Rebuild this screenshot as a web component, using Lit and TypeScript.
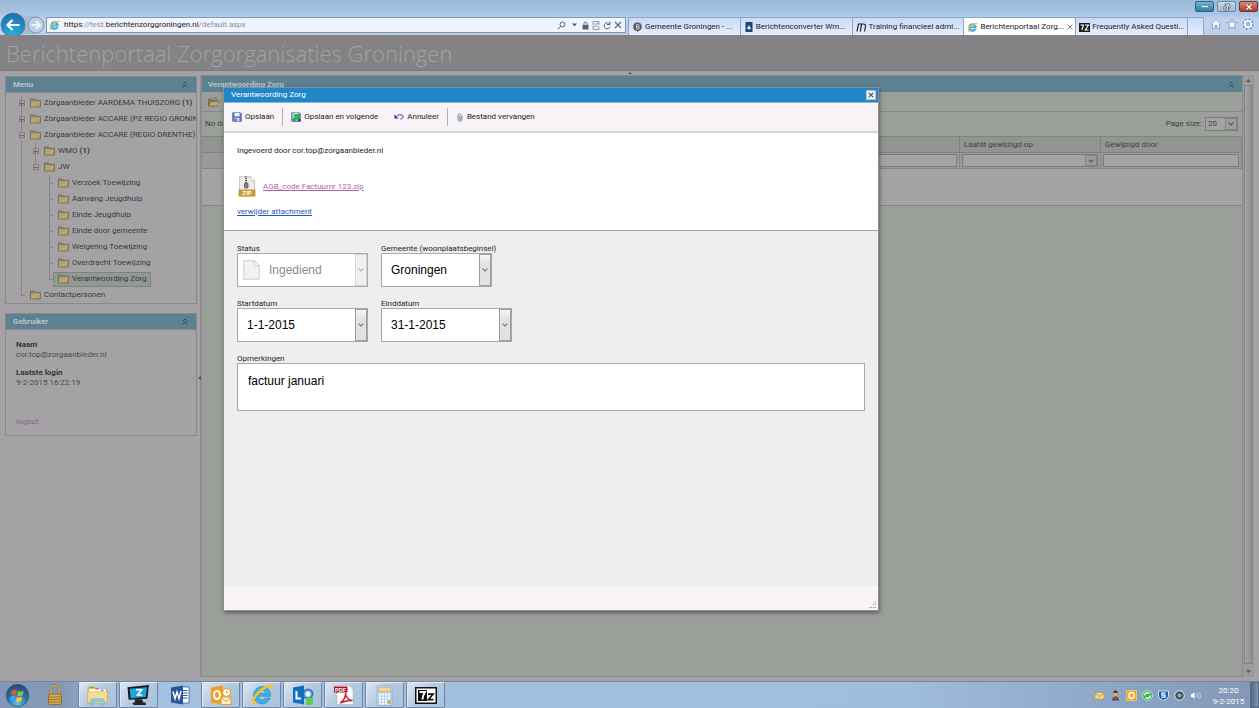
import { LitElement, html, css, svg, nothing } from "lit";
import { customElement, property } from "lit/decorators.js";
import { classMap } from "lit/directives/class-map.js";

const base = css`
  * { box-sizing: border-box; }
  button, input, select, textarea { font: inherit; color: inherit; margin: 0; padding: 0; border: 0; border-radius: 0; background: none; outline: none; }
  button { cursor: pointer; }
  svg { display: block; flex: none; }
  ul { list-style: none; margin: 0; padding: 0; }
`;

/* ---------- icons ---------- */
const ieLogo = (s: number) => html`<svg width=${s} height=${s} viewBox="0 0 24 24">
  <path d="M12 3.500a8.700 8.700 0 1 0 8.200 11.600h-4.600a4.400 4.400 0 0 1-7.800-1.800h12.900A8.700 8.700 0 0 0 12 3.500zM7.900 10.300a4.300 4.300 0 0 1 8.200 0z" fill="#3fb0e6" stroke="#1f86c4" stroke-width=".6"/>
  <path d="M2.600 21.300C-.5 17.500 6 8 13.500 4 18 1.500 22.500.8 22.800 3.600c.1 1.300-.4 2.600-1 3.700.3-2-.6-3.300-3-2.700C12.500 6 4.500 14.500 4.300 18.700c0 1.600 1.500 1.700 3.200 1-1.800 1.500-3.700 2.600-4.900 1.600z" fill="#f7c325"/>
</svg>`;

const folder = html`<svg width="11" height="10" viewBox="0 0 22 20">
  <defs><linearGradient id="fg" x1="0" y1="0" x2="1" y2="1"><stop offset="0" stop-color="#a99f82"/><stop offset=".6" stop-color="#bba873"/><stop offset="1" stop-color="#b1934a"/></linearGradient></defs>
  <path d="M1 2h8l2 2.500h10V18H1z" fill="#8f8563" stroke="#67624f" stroke-width="1.400"/>
  <path d="M2 6.500h18V17H2z" fill="url(#fg)"/>
</svg>`;

const chevrons = html`<svg width="6" height="7" viewBox="0 0 6 7" fill="none" stroke="#2f4a54" stroke-width="1"><path d="M.8 3.200L3 1l2.200 2.200M.8 6.200L3 4l2.200 2.200"/></svg>`;

const arrowDown = html`<svg width="6" height="4" viewBox="0 0 6 4" fill="none" stroke="currentColor" stroke-width="1.100"><path d="M.6.6L3 3 5.400.6"/></svg>`;

const floppy = html`<svg width="10" height="10" viewBox="0 0 20 20">
  <path d="M1.500 1.500h15l2 2v15h-17z" fill="#6f7fd0" stroke="#4250a0" stroke-width="1.600"/>
  <path d="M5 1.500h10v7H5z" fill="#eef1ff"/><path d="M5 12h10v6.500H5z" fill="#c9d0f2"/><path d="M6.500 13.500H9v5H6.500z" fill="#36427f"/>
</svg>`;

const floppyNext = html`<svg width="10" height="10" viewBox="0 0 20 20">
  <path d="M1.500 1.500h15l2 2v15h-17z" fill="#b4bdec" stroke="#4250a0" stroke-width="1.600"/>
  <path d="M5 1.500h10v6H5z" fill="#eef1ff"/>
  <path d="M3 15l6-5-3-5 12-1-2 12-4-3-5 6z" fill="#22c23c" stroke="#0f8d26" stroke-width="1"/><path d="M14 14h5v5h-5z" fill="#36427f"/>
</svg>`;

const undo = html`<svg width="10" height="8" viewBox="0 0 20 16" fill="none" stroke="#2b2a86" stroke-width="2">
  <path d="M5 6.500C9 3 18 2 18 7c0 3-2 4.500-5 5"/><path d="M1 3v8h8z" fill="#2b2a86" stroke="none"/>
</svg>`;

const clip = html`<svg width="8" height="9" viewBox="-2 0 16 18" fill="none" stroke="#6c7c92" stroke-width="1.700">
  <path d="M10 6v6.500a4 4 0 0 1-8 0V5a3 3 0 0 1 6 0v7a1.500 1.500 0 0 1-3.200 0V6"/>
</svg>`;

const zipFile = html`<svg width="18" height="21" viewBox="0 0 36 42">
  <path d="M3 1.500h22l8 8V40H3z" fill="#ececec" stroke="#b5b5b5" stroke-width="1.500"/>
  <path d="M25 1.500v8h8z" fill="#fff" stroke="#b5b5b5"/>
  <path d="M16 1v13" stroke="#555" stroke-width="4" stroke-dasharray="2 1.500"/>
  <rect x="13" y="14" width="7" height="10" rx="2" fill="#888" stroke="#444" stroke-width="1.500"/>
  <path d="M1 27h34v14H1z" fill="#cf9a35"/>
  <text x="18" y="38" text-anchor="middle" font-family="Liberation Sans, sans-serif" font-weight="700" font-size="12" fill="#fff">ZIP</text>
</svg>`;

const docIcon = html`<svg class="doc" width="17" height="20" viewBox="0 0 34 40">
  <path d="M1.500 1.500h21l10 10v27h-31z" fill="#f3f3f5" stroke="#c9c9cd" stroke-width="1.800"/>
  <path d="M22.500 1.500v10h10z" fill="#fff" stroke="#bdbdc1" stroke-width="1.500"/>
</svg>`;

/* ---------- browser bar ---------- */
interface Tab { title: string; icon: unknown; active?: boolean; }

@customElement("browser-bar")
export class BrowserBar extends LitElement {
  static styles = [base, css`
    :host { display: block; position: relative; height: 35px; background: linear-gradient(#9bbad8, #a9c6e4 40%, #bfd4f1 55%, #bcd0ec); font: 8px/12px Roboto, sans-serif; color: #1b1b1f; }
    .row { display: flex; align-items: flex-end; height: 35px; }
    .nav { display: flex; align-items: center; width: 46px; height: 26px; flex: none; overflow: hidden; }
    .address { display: flex; align-items: center; gap: 4px; flex: 1 1 578px; min-width: 0; height: 16px; margin-bottom: 2px; padding: 0 3px 0 2px; background: #f0f4ff; border: 1px solid #8795ac; }
    .url { flex: 1; white-space: nowrap; color: #8a8d94; }
    .url b { font-weight: 400; color: #222; }
    .tools { display: flex; align-items: center; gap: 3px; }
    .tabs { display: flex; flex: 0 0 576px; margin-left: 2px; height: 18px; }
    .tab { display: flex; align-items: center; gap: 2px; flex: 1; min-width: 0; padding: 1px 2px 0 3px; border: 1px solid #8fa3c2; border-bottom: 0; border-right: 0; background: linear-gradient(#c8daf6, #e6eefd); white-space: nowrap; }
    .tab.active { background: #fff; }
    .tab.new { flex: 0 0 17px; border-right: 1px solid #8fa3c2; }
    .name { flex: 1; text-align: left; }
    .quick { display: flex; align-items: center; gap: 4px; width: 55px; height: 22px; padding-left: 6px; flex: none; }
    .win { position: absolute; top: 1px; right: 1px; display: flex; gap: 3px; }
    .win button { display: grid; place-items: center; width: 19px; height: 11px; border: 1px solid #6d88a8; border-radius: 2px; background: linear-gradient(#c6d7ea, #9fb9d6); }
    .win .min { background: linear-gradient(#6fb3d4, #2d7fa9); border-color: #2a6282; }
    .win .close { background: linear-gradient(#d98a7d, #b53a28); border-color: #7b3328; }
  `];

  tabs: Tab[] = [
    { title: "Gemeente Groningen - ...", icon: html`<svg width="11" height="10" viewBox="0 0 22 20"><path d="M11 1a8.500 8.500 0 0 1 2 16.800L11 20l-2-2.200A8.500 8.500 0 0 1 11 1z" fill="#5d5d5d"/><path d="M9 5h3a2 2 0 0 1 0 4.500H9zm0 4.500h3.500a2 2 0 0 1 0 4.500H9z" fill="none" stroke="#ddd" stroke-width="1.500"/></svg>` },
    { title: "Berichtenconverter Wm...", icon: html`<svg width="10" height="10" viewBox="0 0 20 20"><path d="M3 0h14v20H3z" fill="#1b4378"/><path d="M10 7v8M6 12h8" stroke="#fff" stroke-width="2.500"/></svg>` },
    { title: "Training financieel admi...", icon: html`<svg width="11" height="9" viewBox="0 0 22 18" fill="none" stroke="#222" stroke-width="2.400"><path d="M2 17L5 2h9q6 0 5 5l-2 10M11 3L8.500 17"/></svg>` },
    { title: "Berichtenportaal Zorg...", icon: ieLogo(11), active: true },
    { title: "Frequently Asked Questi...", icon: html`<svg width="11" height="9" viewBox="0 0 22 18"><path d="M0 0h22v18H0z" fill="#1c1c1c"/><path d="M3 4h6L5.500 14M12 4h7l-6.500 10H19" fill="none" stroke="#fff" stroke-width="2.200"/></svg>` },
  ];

  render() {
    return html`
      <div class="win">
        <button class="min" aria-label="Minimize"><svg width="8" height="3" viewBox="0 0 8 3"><path d="M.5.5h7v2h-7z" fill="#fff" stroke="#48627a" stroke-width=".5"/></svg></button>
        <button aria-label="Restore"><svg width="8" height="8" viewBox="0 0 16 16" fill="#fff" stroke="#48566a" stroke-width="1.500"><path d="M5 2h9v8H5z"/><path d="M2 6h9v8H2z"/><path d="M5 9h3v2H5z"/></svg></button>
        <button class="close" aria-label="Close"><svg width="8" height="6" viewBox="0 0 16 12"><path d="M3 1l10 10M13 1L3 11" stroke="#5a2a24" stroke-width="5"/><path d="M3 1l10 10M13 1L3 11" stroke="#fff" stroke-width="3"/></svg></button>
      </div>
      <div class="row">
        <div class="nav">
          <svg width="46" height="26" viewBox="0 0 46 26">
            <defs><radialGradient id="bk" cx=".5" cy=".9" r=".9"><stop offset="0" stop-color="#29b1e4"/><stop offset="1" stop-color="#1a70a8"/></radialGradient></defs>
            <path d="M14 4q12 3 22 3v18H14z" fill="#a7bbd6"/>
            <circle cx="13" cy="16" r="12" fill="url(#bk)" stroke="#5b7ea2"/>
            <path d="M19.500 16H8.500M12.500 11l-5 5 5 5" fill="none" stroke="#fff" stroke-width="2.200"/>
            <circle cx="36" cy="16" r="8" fill="#bccee8" stroke="#8296b2"/>
            <path d="M31.500 16h7M36 12l4 4-4 4" fill="none" stroke="#eef3fb" stroke-width="2.200"/>
          </svg>
        </div>
        <div class="address">
          ${ieLogo(11)}
          <span class="url"><b>https</b>://test.<b>berichtenzorggroningen.nl</b>/default.aspx</span>
          <span class="tools">
            <svg width="9" height="9" viewBox="0 0 18 18" fill="none" stroke="#5c626b" stroke-width="2"><circle cx="11" cy="7" r="5"/><path d="M7.500 10.500L1.500 16.500"/></svg>
            <svg width="10" height="4" viewBox="0 0 10 4"><path d="M3 .5h5L5.500 3.500z" fill="#5c626b"/></svg>
            <svg width="7" height="9" viewBox="0 0 14 18"><path d="M1 8h12v9H1z" fill="#5c626b"/><path d="M4 8V5a3 3 0 0 1 6 0v3" fill="none" stroke="#5c626b" stroke-width="2"/></svg>
            <svg width="8" height="9" viewBox="0 0 16 18" fill="none" stroke="#7c828b" stroke-width="1.500"><path d="M2 7V1h12v6l-4-3-3 4-3-3zM2 10l4 2 3-3 5 3v5H2z"/></svg>
            <svg width="8" height="9" viewBox="0 0 16 18" fill="none" stroke="#5c626b" stroke-width="2"><path d="M13 6a6 6 0 1 0 1 5"/><path d="M14 1v6H8"/></svg>
            <svg width="8" height="8" viewBox="0 0 16 16" stroke="#5c626b" stroke-width="2.200"><path d="M2 2l12 12M14 2L2 14"/></svg>
          </span>
        </div>
        <div class="tabs">
          ${this.tabs.map((t) => html`<button class=${classMap({ tab: true, active: !!t.active })}>
            ${t.icon}<span class="name">${t.title}</span>
            ${t.active ? html`<svg width="6" height="6" viewBox="0 0 6 6" stroke="#888" stroke-width="1"><path d="M.5.500l5 5M5.500.5l-5 5"/></svg>` : nothing}
          </button>`)}
          <button class="tab new" aria-label="New tab"></button>
        </div>
        <div class="quick">
          <svg width="12" height="12" viewBox="0 0 24 24" fill="#f4f8fe" stroke="#6f87a8" stroke-width="1.300"><path d="M12 3L2.500 12H5v9h5v-6h4v6h5v-9h2.500z"/></svg>
          <svg width="12" height="12" viewBox="0 0 24 24" fill="#f4f8fe" stroke="#6f87a8" stroke-width="1.300"><path d="M12 2l3 7.300 7.500.5-5.800 5 1.900 7.500L12 18l-6.600 4.300 1.900-7.500-5.800-5L9 9.300z"/></svg>
          <svg width="12" height="12" viewBox="0 0 24 24" fill="none"><circle cx="12" cy="12" r="9" stroke="#6f87a8" stroke-width="4" stroke-dasharray="4 3"/><circle cx="12" cy="12" r="6.500" stroke="#f4f8fe" stroke-width="4"/><circle cx="12" cy="12" r="3.500" stroke="#6f87a8" stroke-width="1.300"/></svg>
        </div>
      </div>`;
  }
}

/* ---------- left column ---------- */
interface Node { label: string; count?: string; level: number; box?: "+" | "-"; last?: boolean; rails: number[]; selected?: boolean; }

@customElement("side-menu")
export class SideMenu extends LitElement {
  static styles = [base, css`
    :host { display: flex; flex-direction: column; gap: 9px; padding: 1px 3px 0 5px; font: 8px/10px Roboto, sans-serif; color: #3a3a3c; }
    .panel { border: 1px solid #8a888b; }
    .head { display: flex; align-items: center; justify-content: space-between; height: 16px; margin: 0; padding: 0 8px 0 7px; background: #5c8191; border-bottom: 1px solid #8a888b; color: #b9c3c8; font: 700 8px/15px Roboto, sans-serif; }
    .tree { padding: 2px 0 0; }
    .node { display: flex; align-items: center; height: 16px; overflow: hidden; white-space: nowrap; }
    .item { display: flex; align-items: center; gap: 3px; height: 15px; padding: 0 3px 0 4px; border: 1px solid transparent; }
    .item.on { background: #929893; border-color: #7c827d; }
    .user { padding: 10px 10px 8px; }
    dl { margin: 0; }
    dt { font-weight: 700; color: #353537; }
    dd { margin: 0 0 8px; color: #4a4a4c; }
    .out { display: block; margin-top: 29px; color: #8d6187; text-decoration: none; }
  `];

  nodes: Node[] = [
    { label: "Zorgaanbieder AARDEMA THUISZORG", count: "(1)", level: 0, box: "+", rails: [] },
    { label: "Zorgaanbieder ACCARE (PZ REGIO GRONINGEN)", level: 0, box: "+", rails: [] },
    { label: "Zorgaanbieder ACCARE (REGIO DRENTHE)", count: "(1)", level: 0, box: "-", rails: [] },
    { label: "WMO", count: "(1)", level: 1, box: "+", rails: [0] },
    { label: "JW", level: 1, box: "-", last: true, rails: [0] },
    ...["Verzoek Toewijzing", "Aanvang Jeugdhulp", "Einde Jeugdhulp", "Einde door gemeente", "Weigering Toewijzing", "Overdracht Toewijzing"].map((label) => ({ label, level: 2, rails: [0] })),
    { label: "Verantwoording Zorg", level: 2, last: true, rails: [0], selected: true },
    { label: "Contactpersonen", level: 0, last: true, rails: [] },
  ];

  guides(n: Node) {
    const w = 19 + n.level * 14;
    const x = w - 4;
    return html`<svg width=${w} height="16" viewBox="0 0 ${w} 16" shape-rendering="crispEdges" fill="none" stroke="#868487">
      ${n.rails.map((r) => svg`<path d="M${r * 14 + 15.5} 0v16"/>`)}
      <path d="M${x + 0.5} 0v${n.last ? 8 : 16}M${x} 8.500h4"/>
      ${n.box ? svg`<rect x=${x - 1.5} y="5.500" width="5" height="5" fill="#a5a2a5" stroke="#828083"/><path d="M${x - 1} 8.500h4" stroke="#6b696c"/>` : nothing}
      ${n.box === "+" ? svg`<path d="M${x + 0.5} 7v3" stroke="#6b696c"/>` : nothing}
    </svg>`;
  }

  render() {
    return html`
      <section class="panel">
        <h2 class="head">Menu ${chevrons}</h2>
        <ul class="tree">
          ${this.nodes.map((n) => html`<li class="node">${this.guides(n)}
            <span class=${classMap({ item: true, on: !!n.selected })}>${folder}<span>${n.label} ${n.count ? html`<b>${n.count}</b>` : nothing}</span></span></li>`)}
        </ul>
      </section>
      <section class="panel">
        <h2 class="head">Gebruiker ${chevrons}</h2>
        <div class="user">
          <dl><dt>Naam</dt><dd>cor.top@zorgaanbieder.nl</dd><dt>Laatste login</dt><dd>9-2-2015 16:22:19</dd></dl>
          <a class="out" href="#">logout</a>
        </div>
      </section>`;
  }
}

/* ---------- result grid ---------- */
@customElement("result-grid")
export class ResultGrid extends LitElement {
  static styles = [base, css`
    :host { display: flex; font: 8px/10px Roboto, sans-serif; color: #3f4142; }
    .main { display: flex; flex-direction: column; flex: 1; min-width: 0; background: #9b9f9a; border: 1px solid #8a8c8a; }
    .head { display: flex; align-items: center; justify-content: space-between; height: 16px; margin: 0; padding: 0 8px 0 6px; background: #5c8191; color: #b9c3c8; font: 700 8px/15px Roboto, sans-serif; }
    .bar { display: flex; align-items: center; height: 20px; padding: 0 6px; border-bottom: 1px solid #868986; }
    .pager { display: flex; align-items: center; justify-content: space-between; height: 24px; padding: 0 4px 0 3px; }
    .size { display: flex; align-items: center; gap: 3px; }
    .pick { position: relative; display: flex; width: 33px; height: 14px; border: 1px solid #7d7b7e; background: #a5a2a5; }
    .pick select { appearance: none; width: 100%; padding-left: 2px; }
    .btn { position: absolute; top: 0; right: 0; bottom: 0; display: grid; place-items: center; width: 12px; border: 1px solid #858386; background: #9e9b9e; pointer-events: none; color: #555; }
    table { width: 100%; table-layout: fixed; border-collapse: collapse; background: #a5a2a5; border-bottom: 1px solid #8a8c8a; }
    th { height: 16px; padding: 0 4px; text-align: left; font-weight: 400; background: #919590; border: 1px solid #7f827f; border-left: 0; }
    th.plain { border-right-color: #919590; }
    td { height: 16px; padding: 1px 2px; background: #9a989b; border-right: 1px solid #868487; border-bottom: 1px solid #868487; }
    td.wide { height: 37px; background: #a5a2a5; }
    td.open { border-right: 0; }
    .filter { position: relative; display: block; height: 13px; border: 1px solid #7d7b7e; background: #a5a2a5; }
    .filter input { display: block; width: 100%; height: 11px; }
    .c1 { width: 28px; } .c3 { width: 141px; }
    .scroll { display: flex; flex-direction: column; align-items: center; justify-content: space-between; width: 11px; background: #9b9a9c; color: #5d5b5e; padding: 4px 0; }
    .thumb { flex: 1; width: 9px; margin: 3px 0 6px; border: 1px solid #858386; background: linear-gradient(90deg, #a5a2a5, #8e8c8f); }
  `];

  render() {
    return html`
      <section class="main">
        <h2 class="head">Verantwoording Zorg ${chevrons}</h2>
        <div class="bar"><svg width="12" height="10" viewBox="0 0 24 20"><path d="M1 18V4h7l2 3h9v11z" fill="#8d7a4c" stroke="#5f543a"/><path d="M1 18l5-9h17l-4 9z" fill="#b8a676" stroke="#6b5f42"/><path d="M12 3q5-3 7 2" fill="none" stroke="#555" stroke-width="1.500"/></svg></div>
        <div class="pager">
          <span>No data to paginate</span>
          <span class="size"><label for="ps">Page size:</label>
            <span class="pick"><select id="ps"><option>20</option></select><span class="btn">${arrowDown}</span></span></span>
        </div>
        <table>
          <colgroup><col class="c1"><col><col class="c3"><col class="c3"></colgroup>
          <thead><tr><th class="plain"></th><th></th><th>Laatst gewijzigd op</th><th>Gewijzigd door</th></tr></thead>
          <tbody>
            <tr>
              <td class="open"></td>
              <td><span class="filter"><input aria-label="Filter"></span></td>
              <td><span class="filter"><input aria-label="Filter laatst gewijzigd op"><span class="btn">${arrowDown}</span></span></td>
              <td><span class="filter"><input aria-label="Filter gewijzigd door"></span></td>
            </tr>
            <tr><td class="wide open" colspan="4"></td></tr>
          </tbody>
        </table>
      </section>
      <div class="scroll">
        <svg width="5" height="3" viewBox="0 0 5 3"><path d="M0 3L2.500 0 5 3z" fill="currentColor"/></svg>
        <span class="thumb"></span>
        <svg width="5" height="3" viewBox="0 0 5 3"><path d="M0 0l2.500 3L5 0z" fill="currentColor"/></svg>
      </div>`;
  }
}

/* ---------- dialog ---------- */
@customElement("edit-dialog")
export class EditDialog extends LitElement {
  static styles = [base, css`
    :host { display: flex; flex-direction: column; background: #eee; border: 1px solid #8f8f92; box-shadow: 1px 2px 4px rgba(40, 40, 45, .55); font: 8px/10px Roboto, sans-serif; color: #1e1e20; }
    .title { display: flex; align-items: center; justify-content: space-between; height: 15px; padding: 0 2px 1px 7px; background: #2086c8; border-bottom: 1px solid #8bb8da; color: #fff; }
    .title h2 { margin: 0; font: inherit; }
    .x { display: grid; place-items: center; width: 10px; height: 10px; background: #eef0f2; border: 1px solid #b9c4cc; }
    .bar { display: flex; align-items: center; height: 30px; padding: 0 8px; background: #f7f3f7; border-bottom: 2px solid #d9d7da; }
    .bar button { display: flex; align-items: center; gap: 3px; margin-right: 16px; white-space: nowrap; }
    .bar .end { margin-right: 8px; }
    .bar i { width: 1px; height: 18px; margin-right: 8px; background: #b4b1b5; }
    .info { height: 98px; padding: 13px 13px 0; background: #fff; border-bottom: 1px solid #a6a6a8; }
    p { margin: 0; }
    .info .file { display: flex; align-items: center; gap: 7px; margin: 20px 0 10px; padding-left: 1px; }
    .file a { color: #b062a8; }
    .del { color: #2a55b8; }
    form { flex: 1; min-height: 0; padding: 13px 13px 0; }
    .row { display: flex; gap: 13px; margin-bottom: 12px; }
    .field { display: flex; flex-direction: column; }
    label { line-height: 9px; white-space: nowrap; }
    .w1 { width: 131px; } .w2 { width: 111px; }
    .ctl { position: relative; display: flex; align-items: center; height: 34px; background: #fff; border: 1px solid #a9a9ab; font: 12px/16px "Liberation Sans", Arial, sans-serif; color: #000; }
    .ctl select, .ctl input { appearance: none; flex: 1; min-width: 0; width: 100%; height: 32px; padding-left: 9px; opacity: 1; }
    .doc { margin-left: 5px; }
    .ctl.off { color: #8a8a8c; }
    .drop { position: absolute; top: 0; right: 0; bottom: 0; display: grid; place-items: center; width: 12px; border: 1px solid #9d9d9f; background: linear-gradient(#f8f6f8, #e2e2e3 30%, #e2e2e3); color: #777; }
    .ctl.off .drop { border-color: #d4d4d6; background: #f0eff1; color: #aaa; }
    span.drop { pointer-events: none; }
    textarea { display: block; width: 100%; height: 48px; padding: 9px 10px; background: #fff; border: 1px solid #a9a9ab; font: 12px/16px "Liberation Sans", Arial, sans-serif; color: #000; resize: none; }
    .foot { display: flex; justify-content: flex-end; align-items: flex-end; height: 24px; padding: 1px; background: #f7f3f7; }
  `];

  render() {
    return html`
      <header class="title"><h2>Verantwoording Zorg</h2>
        <button class="x" aria-label="Sluiten"><svg width="6" height="6" viewBox="0 0 6 6" stroke="#55585c" stroke-width="1.200"><path d="M.8.8l4.400 4.400M5.200.8L.8 5.200"/></svg></button></header>
      <div class="bar">
        <button class="end">${floppy}Opslaan</button><i></i>
        <button>${floppyNext}Opslaan en volgende</button>
        <button class="end">${undo}Annuleer</button><i></i>
        <button>${clip}Bestand vervangen</button>
      </div>
      <div class="info">
        <p>Ingevoerd door cor.top@zorgaanbieder.nl</p>
        <p class="file">${zipFile}<a href="#">AGB_code Factuurnr 123.zip</a></p>
        <p><a class="del" href="#">verwijder attachment</a></p>
      </div>
      <form>
        <div class="row">
          <div class="field w1"><label for="st">Status</label>
            <span class="ctl off">${docIcon}<select id="st" disabled><option>Ingediend</option></select><span class="drop">${arrowDown}</span></span></div>
          <div class="field w2"><label for="gm">Gemeente (woonplaatsbeginsel)</label>
            <span class="ctl"><select id="gm"><option>Groningen</option></select><span class="drop">${arrowDown}</span></span></div>
        </div>
        <div class="row">
          <div class="field w1"><label for="sd">Startdatum</label>
            <span class="ctl"><input id="sd" value="1-1-2015"><button type="button" class="drop" aria-label="Kies startdatum">${arrowDown}</button></span></div>
          <div class="field w1"><label for="ed">Einddatum</label>
            <span class="ctl"><input id="ed" value="31-1-2015"><button type="button" class="drop" aria-label="Kies einddatum">${arrowDown}</button></span></div>
        </div>
        <div class="field"><label for="op">Opmerkingen</label><textarea id="op">factuur januari</textarea></div>
      </form>
      <footer class="foot"><svg width="8" height="8" viewBox="0 0 8 8" fill="#918f92"><path d="M6 1h1v1H6zM4 3h1v1H4zM6 3h1v1H6zM0 6h1v1H0zM2 6h1v1H2zM4 6h1v1H4zM6 6h1v1H6z"/></svg></footer>`;
  }
}

/* ---------- task bar ---------- */
@customElement("task-bar")
export class TaskBar extends LitElement {
  static styles = [base, css`
    :host { display: flex; height: 27px; background: linear-gradient(90deg, #8298b6, #8599b6 60px, #a3c0df 140px, #9fbddd 900px, #8fa8c8 1100px, #8197b5); border-top: 1px solid #7486a0; color: #fff; font: 8px/11px Roboto, sans-serif; }
    .apps { display: flex; flex: 1; gap: 2px; padding-left: 3px; }
    .apps button { display: grid; place-items: center; flex: none; width: 39px; height: 26px; border: 1px solid transparent; border-radius: 2px; }
    .apps .orb { width: 29px; }
    .apps .lock { width: 42px; }
    .apps .run { border-color: #6d84a3; border-top-color: #e3edf8; background: linear-gradient(135deg, #dce7f3, #b4c8df 50%, #a9c2de); box-shadow: inset 1px 0 #dfe9f5; }
    .tray { display: flex; align-items: center; gap: 5px; }
    .clock { width: 47px; margin: 3px 0 0 2px; padding-left: 4px; text-align: center; }
    .show { width: 9px; border: 1px solid #566a85; background: linear-gradient(90deg, #51667f, #7e94b0); }
  `];

  render() {
    return html`
      <div class="apps">
        <button class="orb" aria-label="Start"><svg width="25" height="25" viewBox="0 0 50 50">
          <defs><radialGradient id="o" cx=".5" cy=".85" r=".9"><stop offset="0" stop-color="#58c2ee"/><stop offset=".5" stop-color="#2a6ea8"/><stop offset="1" stop-color="#2a4468"/></radialGradient></defs>
          <circle cx="25" cy="25" r="22.500" fill="url(#o)" stroke="#3c5577" stroke-width="1.500"/>
          <path d="M14 15q5-3 10 0l-2 9q-5-3-10 0z" fill="#ea5a2c"/><path d="M26.500 16q5 3 11 0l-2.500 9q-5 3-10.500 0z" fill="#8cc63f"/>
          <path d="M11.500 26.500q5-3 10 0l-2 9q-5-3-10 0z" fill="#3fa4e8"/><path d="M24 27.500q5 3 10.500 0l-2 9q-5 3-11 0z" fill="#fbc62c"/></svg></button>
        <button class="lock" aria-label="Lock"><svg width="16" height="22" viewBox="0 0 32 44">
          <path d="M8 22V11a8 8 0 0 1 16 0v11" fill="none" stroke="#7e6430" stroke-width="5"/><path d="M8 22V11a8 8 0 0 1 16 0v11" fill="none" stroke="#dcc080" stroke-width="2.500"/>
          <rect x="3" y="20" width="26" height="21" rx="3" fill="#d0a648" stroke="#7f6224" stroke-width="1.500"/><path d="M4 26h24M4 31h24M4 36h24" stroke="#94742c" stroke-width="1.500"/></svg></button>
        <button class="run" aria-label="Explorer"><svg width="23" height="22" viewBox="0 0 44 42">
          <path d="M4 6h14l3 4h19v26H4z" fill="#e9c86a" stroke="#b68f34"/><path d="M6 10h32v6H6z" fill="#fff"/><path d="M8 5h6v3H8z" fill="#55b04c"/><path d="M18 8h6v2h-6z" fill="#d9483b"/><path d="M28 11h6v2h-6z" fill="#3c8ed0"/>
          <path d="M3 15h38l-1 22H4z" fill="#f6df94" stroke="#c7a244"/><path d="M9 40v-8q0-4 5-4h16q5 0 5 4v8h-5v-6H14v6z" fill="#8fcbf0" stroke="#5a9fd0"/></svg></button>
        <button class="run" aria-label="Remote desktop"><svg width="23" height="22" viewBox="0 0 44 42">
          <path d="M1 6l41-4-3 26-36 2z" fill="#16191d"/><path d="M5 9l33-3-2 19-29 2z" fill="#21a5d8"/><path d="M17 11h11l-8 10h9" fill="none" stroke="#fff" stroke-width="3"/><path d="M15 29h14l2 6 5 1v4H13l-3-3 5-2z" fill="#222629"/></svg></button>
        <button aria-label="Word"><svg width="20" height="20" viewBox="0 0 40 40">
          <path d="M20 4h18v32H20z" fill="#fff" stroke="#2a5699" stroke-width="1.500"/><path d="M24 11h11M24 16h11M24 21h11M24 26h11" stroke="#2a5699" stroke-width="2"/>
          <path d="M2 5l24-4v38L2 35z" fill="#2a5699"/><path d="M6 13l4 14 4-13 4 13 4-15" fill="none" stroke="#fff" stroke-width="3"/></svg></button>
        <button class="run" aria-label="Outlook"><svg width="22" height="21" viewBox="0 0 44 42">
          <path d="M2 5l24-4v38L2 35z" fill="#f0a01e"/><ellipse cx="14" cy="20" rx="6" ry="8" fill="none" stroke="#fff" stroke-width="4"/>
          <circle cx="33" cy="15" r="8" fill="#fff" stroke="#e59a1d" stroke-width="2"/><path d="M33 10v5h4" fill="none" stroke="#e59a1d" stroke-width="1.800"/><path d="M22 24h20v15H22z" fill="#fff3d2" stroke="#e59a1d" stroke-width="2"/><path d="M22 25l10 8 10-8" fill="none" stroke="#e59a1d" stroke-width="2"/></svg></button>
        <button class="run" aria-label="Internet Explorer">${ieLogo(24)}</button>
        <button class="run" aria-label="Lync"><svg width="22" height="21" viewBox="0 0 44 42">
          <circle cx="32" cy="18" r="9" fill="none" stroke="#2b7fc9" stroke-width="4"/><circle cx="32" cy="18" r="4" fill="#fff"/>
          <path d="M2 5l22-4v38L2 35z" fill="#0f6fc0"/><path d="M9 12v15h9" fill="none" stroke="#fff" stroke-width="4"/><path d="M28 26h14v14H28z" fill="#58d048"/></svg></button>
        <button class="run" aria-label="PDF reader"><svg width="22" height="22" viewBox="0 0 44 44">
          <path d="M8 3h24l8 8v30H8z" fill="#fff" stroke="#aaa"/><path d="M2 5h27v12H2z" fill="#a9151e"/>
          <text x="15" y="15" text-anchor="middle" font-family="Liberation Sans, sans-serif" font-weight="700" font-size="11" fill="#fff">PDF</text>
          <path d="M14 38c8-4 12-14 11-20 1 10 6 14 14 15-9-1-17 1-25 5z" fill="none" stroke="#c8202a" stroke-width="3"/></svg></button>
        <button class="run" aria-label="Calculator"><svg width="17" height="21" viewBox="0 0 34 42">
          <rect x="2" y="1" width="30" height="40" rx="2" fill="#b9d4ee" stroke="#7ba3cc"/><path d="M5 5h24v8H5z" fill="#f6d491" stroke="#d6a33c"/><path d="M6 19h22M6 25h22M6 31h22M6 37h22" stroke="#fff" stroke-width="3.500" stroke-dasharray="4 2"/><path d="M24 30h5v8h-5z" fill="#e9a545"/></svg></button>
        <button class="run" aria-label="7-Zip"><svg width="22" height="17" viewBox="0 0 44 34">
          <path d="M0 0h44v34H0z" fill="#111"/><path d="M3 3h38v28H3z" fill="#fff"/><path d="M6 6h18v22H6z" fill="#111"/><path d="M9 10h11q-5 7-5 15" fill="none" stroke="#fff" stroke-width="4"/><path d="M26 14h10L27 25h10" fill="none" stroke="#111" stroke-width="3.500"/></svg></button>
      </div>
      <div class="tray">
        <svg width="11" height="11" viewBox="0 0 22 22"><path d="M2 5h18v13H2z" fill="#f5d98c" stroke="#a8802e"/><path d="M2 6l9 7 9-7" fill="none" stroke="#a8802e" stroke-width="1.500"/></svg>
        <svg width="11" height="11" viewBox="0 0 22 22"><circle cx="11" cy="5" r="4" fill="#2a2420"/><circle cx="11" cy="9" r="4" fill="#e8b23c"/><path d="M4 21q1-8 7-8t7 8z" fill="#3a4a78"/><path d="M11 13v5M7 15l8 5" stroke="#e03a3a" stroke-width="2.500"/></svg>
        <svg width="11" height="11" viewBox="0 0 22 22"><path d="M1 1h20v20H1z" fill="#f7a71c" stroke="#ffe19a"/><ellipse cx="11" cy="11" rx="5" ry="6" fill="none" stroke="#fff" stroke-width="3"/></svg>
        <svg width="11" height="11" viewBox="0 0 22 22"><circle cx="11" cy="11" r="10" fill="#35b84e" stroke="#d9f2dc" stroke-width="1.500"/><path d="M5 11a6 6 0 0 1 10-4M17 11a6 6 0 0 1-10 4" fill="none" stroke="#fff" stroke-width="3"/></svg>
        <svg width="11" height="11" viewBox="0 0 22 22"><path d="M1 2h20v10q0 6-10 9Q1 18 1 12z" fill="#2360b0" stroke="#fff" stroke-width="1.500"/><path d="M15 6H8v4h6v4H7" fill="none" stroke="#fff" stroke-width="2.500"/></svg>
        <svg width="11" height="11" viewBox="0 0 22 22"><circle cx="11" cy="11" r="9.500" fill="#3f5662" stroke="#e8eef4" stroke-width="2"/><circle cx="11" cy="11" r="4" fill="#86b3b8"/></svg>
        <svg width="11" height="11" viewBox="0 0 22 22"><path d="M2 8h3l4-4v14l-4-4H2z" fill="#fff"/><path d="M12 8q3 3 0 6M15 6q5 5 0 10M18 4q7 7 0 14" fill="none" stroke="#dfe8f3" stroke-width="1.300"/></svg>
      </div>
      <div class="clock">20:20<br>9-2-2015</div>
      <button class="show" aria-label="Show desktop"></button>`;
  }
}

/* ---------- root ---------- */
@customElement("app-root")
export class AppRoot extends LitElement {
  @property() heading = "Berichtenportaal Zorgorganisaties Groningen";

  static styles = [base, css`
    :host { display: flex; flex-direction: column; height: 100vh; overflow: hidden; background: #a5a2a5; }
    .page { position: relative; display: flex; flex-direction: column; flex: 1; min-height: 0; }
    h1 { height: 36px; margin: 0; padding: 0 6px; background: #848284; border-bottom: 1px solid #7d7b7e; color: #a3a1a4; font: 300 22px/36px "Open Sans", sans-serif; white-space: nowrap; }
    .split { display: flex; justify-content: center; height: 4px; padding-top: 1px; }
    .cols { display: flex; flex: 1; min-height: 0; padding: 0 5px 4px 0; }
    side-menu { flex: 0 0 201px; min-width: 0; border-right: 1px solid #8f8d90; position: relative; }
    .grip { position: absolute; right: 0; top: 301px; }
    .left { position: relative; display: flex; flex-direction: column; flex: 0 0 201px; min-width: 0; }
    .left side-menu { flex: 1; }
    result-grid { flex: 1; min-width: 0; }
    edit-dialog { position: absolute; top: 52px; right: 380px; bottom: 70px; left: 223px; }
  `];

  render() {
    return html`
      <browser-bar></browser-bar>
      <main class="page">
        <h1>${this.heading}</h1>
        <div class="split"><svg width="4" height="2" viewBox="0 0 4 2"><path d="M0 2l2-2 2 2z" fill="#555"/></svg></div>
        <div class="cols">
          <div class="left"><side-menu></side-menu><svg class="grip" width="3" height="4" viewBox="0 0 3 4"><path d="M3 0L0 2l3 2z" fill="#555"/></svg></div>
          <result-grid></result-grid>
        </div>
        <edit-dialog></edit-dialog>
      </main>
      <task-bar></task-bar>`;
  }
}
